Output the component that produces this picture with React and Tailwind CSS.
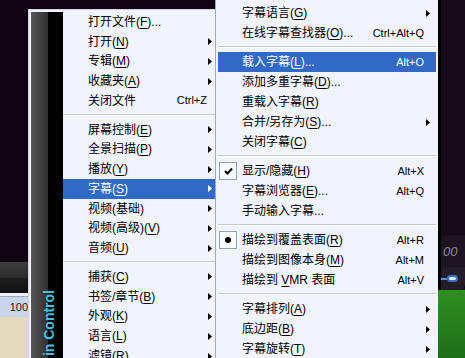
import React from "react";

const Arrow = ({ white }) => (
  <svg width="4" height="7" viewBox="0 0 4 7" className="shrink-0">
    <path d="M0 0L4 3.5L0 7z" fill={white ? "#fff" : "#000"} />
  </svg>
);

function Label({ text, u }) {
  // u = index of the underlined mnemonic char
  if (u === undefined) return <span>{text}</span>;
  return (
    <span>
      {text.slice(0, u)}
      <span className="underline underline-offset-[2px]">{text[u]}</span>
      {text.slice(u + 1)}
    </span>
  );
}

function Row({ item, sub }) {
  const hi = item.hi;
  const padR = item.arrow ? (sub ? "pr-[6px]" : "pr-[4px]") : sub ? "pr-[12px]" : "pr-[9px]";
  return (
    <div
      className={`relative h-[20px] flex items-center ${sub ? "pl-[24px]" : "pl-[25px]"} ${padR} ${
        hi ? "bg-[#3169c6] text-white" : "text-black"
      }`}
    >
      {item.mark && (
        <div className="absolute left-[1px] top-[1px] w-[18px] h-[18px] border border-[#8ea3c4] bg-[#f7f9fd] flex items-center justify-center">
          {item.mark === "check" ? (
            <svg width="9" height="8" viewBox="0 0 9 8">
              <path d="M1 4L3.5 6.5L8 1.5" stroke="#000" strokeWidth="2" fill="none" />
            </svg>
          ) : (
            <div className="w-[6px] h-[6px] rounded-full bg-black" />
          )}
        </div>
      )}
      <div className="flex-1 whitespace-nowrap">
        <Label text={item.t} u={item.u} />
      </div>
      {item.k && <span className="whitespace-nowrap text-[11px]">{item.k}</span>}
      {item.arrow && <Arrow white={hi} />}
    </div>
  );
}

const Sep = () => (
  <div className="h-[9px] pt-[3px]">
    <div className="h-px bg-[#c6c6cf]" />
    <div className="h-px bg-white" />
  </div>
);

const mainItems = [
  { t: "打开文件(F)...", u: 5 },
  { t: "打开(N)", u: 3, arrow: true },
  { t: "专辑(M)", u: 3, arrow: true },
  { t: "收藏夹(A)", u: 4, arrow: true },
  { t: "关闭文件", k: "Ctrl+Z" },
  "sep",
  { t: "屏幕控制(E)", u: 5, arrow: true },
  { t: "全景扫描(P)", u: 5, arrow: true },
  { t: "播放(Y)", u: 3, arrow: true },
  { t: "字幕(S)", u: 3, arrow: true, hi: true },
  { t: "视频(基础)", arrow: true },
  { t: "视频(高级)(V)", u: 7, arrow: true },
  { t: "音频(U)", u: 3, arrow: true },
  "sep",
  { t: "捕获(C)", u: 3, arrow: true },
  { t: "书签/章节(B)", u: 6, arrow: true },
  { t: "外观(K)", u: 3, arrow: true },
  { t: "语言(L)", u: 3, arrow: true },
  { t: "滤镜(R)", u: 3, arrow: true },
];

const subItems = [
  { t: "字幕语言(G)", u: 5, arrow: true },
  { t: "在线字幕查找器(O)...", u: 8, k: "Ctrl+Alt+Q" },
  "sep",
  { t: "载入字幕(L)...", u: 5, k: "Alt+O", hi: true },
  { t: "添加多重字幕(D)...", u: 7 },
  { t: "重载入字幕(R)", u: 6 },
  { t: "合并/另存为(S)...", u: 7, arrow: true },
  { t: "关闭字幕(C)", u: 5 },
  "sep",
  { t: "显示/隐藏(H)", u: 6, k: "Alt+X", mark: "check" },
  { t: "字幕浏览器(E)...", u: 6, k: "Alt+Q" },
  { t: "手动输入字幕..." },
  "sep",
  { t: "描绘到覆盖表面(R)", u: 8, k: "Alt+R", mark: "dot" },
  { t: "描绘到图像本身(M)", u: 8, k: "Alt+M" },
  { t: "描绘到 VMR 表面", u: 4, k: "Alt+V" },
  "sep",
  { t: "字幕排列(A)", u: 5, arrow: true },
  { t: "底边距(B)", u: 4, arrow: true },
  { t: "字幕旋转(T)", u: 5, arrow: true },
];

export default function App() {
  return (
    <div className="relative w-[465px] h-[358px] overflow-hidden bg-[#0f0512] font-['Liberation_Sans','Noto_Sans_CJK_SC',sans-serif] text-[12px] leading-none">
      {/* player behind the menus */}
      <div className="flex h-full">
        <div className="w-[28px] flex flex-col">
          <div className="h-[262px] bg-[#0f0512]" />
          <div className="h-[16px] bg-gradient-to-b from-[#3e3e3e] to-[#2a2a2a]" />
          <div className="h-[15px] bg-gradient-to-b from-[#1e1e1e] to-[#111]" />
          <div className="h-[4px] bg-[#eef0f4] border-b border-[#9aa8c0]" />
          <div className="h-[20px] bg-[#c9d5ea] flex items-center justify-end text-[11px] text-[#222]">100</div>
          <div className="flex-1 bg-[#e4dabd]" />
        </div>
        <div className="flex-1" />
        <div className="w-[27px] flex flex-col">
          <div className="h-[235px] bg-[#150a18] border-l-[3px] border-black" />
          <div className="h-[32px] bg-[#1c1420] border-l-[3px] border-black text-[#8a8a92] italic text-[13px] pl-[2px] pt-[10px]">00</div>
          <div className="h-[23px] bg-[#241c28] rounded-br-[6px] border-l-[3px] border-black flex items-center">
            <div className="h-[2px] w-[6px] bg-[#5a8ad0]" />
            <div className="w-[11px] h-[7px] rounded-full bg-[#dfe8f8] border-2 border-[#3d6fc4]" />
          </div>
          <div className="flex-1 bg-gradient-to-b from-[#2f8f22] to-[#1f6e18]" />
        </div>
      </div>

      {/* main context menu */}
      <div className="absolute left-[28px] top-[9px] w-[191px] h-[360px] border border-[#d2cee8] bg-[#f1f4fa] p-[2px] flex">
        <div className="w-[32px] shrink-0 flex bg-[linear-gradient(to_right,#585858_0,#2e2e2e_17px,#000_17px)] pt-[278px] pl-[11px]">
          <div className="[writing-mode:vertical-rl] rotate-180 h-max text-[14px] font-bold text-[#3cc4e8] font-['Liberation_Sans',sans-serif] whitespace-nowrap">
            You're in Control
          </div>
        </div>
        <div className="flex-1 flex flex-col">
          {mainItems.map((it, i) => (it === "sep" ? <Sep key={i} /> : <Row key={i} item={it} />))}
        </div>
      </div>

      {/* subtitle submenu */}
      <div className="absolute left-[215px] top-0 w-[223px] h-[362px] border-l border-[#a9a9b4] bg-[#f1f4fa] pl-[2px] pr-[2px] pt-[3px] flex flex-col">
        {subItems.map((it, i) => (it === "sep" ? <Sep key={i} /> : <Row key={i} item={it} sub />))}
      </div>
    </div>
  );
}
